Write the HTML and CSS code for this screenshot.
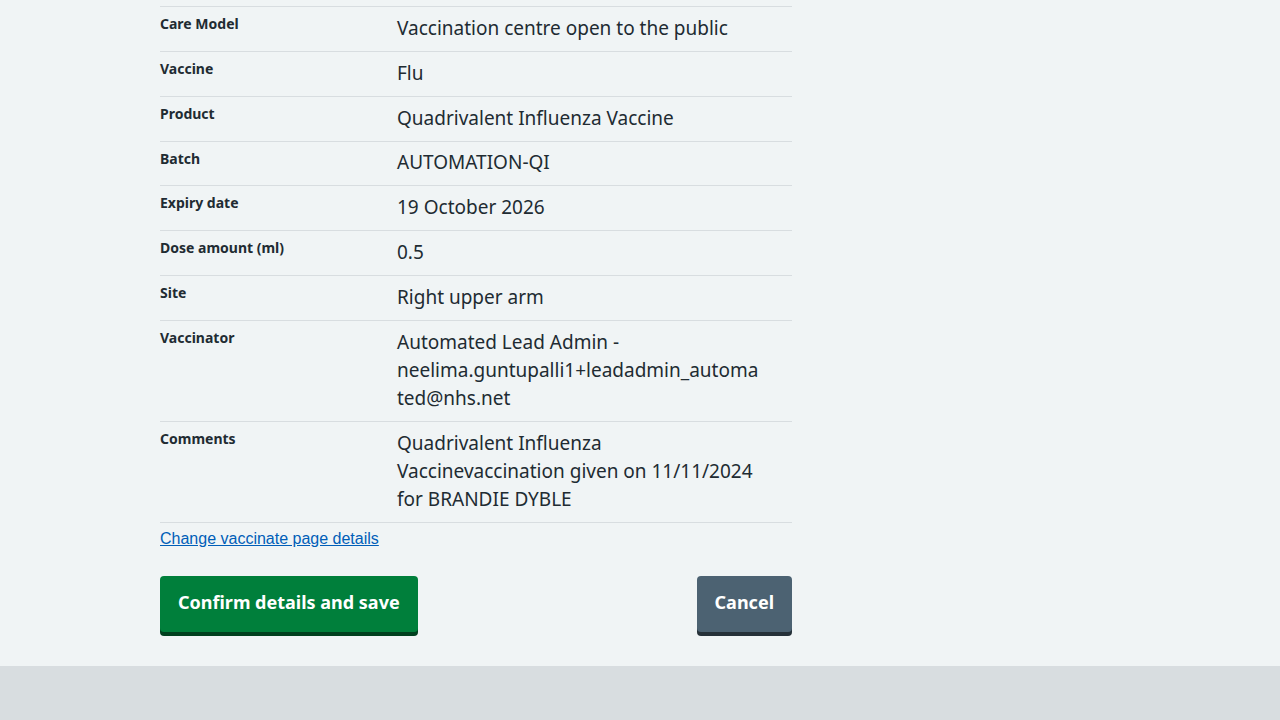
FILE: index.html
```html
<!DOCTYPE html>
<html lang="en">
<head>
<meta charset="utf-8">
<title>Check and confirm</title>
<link rel="stylesheet" href="styles.css">
</head>
<body>
<main class="main">
  <div class="container">
    <dl class="summary">
      <div class="row"><dt class="key">Care Model</dt><dd class="value">Vaccination centre open to the public</dd></div>
      <div class="row"><dt class="key">Vaccine</dt><dd class="value">Flu</dd></div>
      <div class="row"><dt class="key">Product</dt><dd class="value">Quadrivalent Influenza Vaccine</dd></div>
      <div class="row"><dt class="key">Batch</dt><dd class="value">AUTOMATION-QI</dd></div>
      <div class="row"><dt class="key">Expiry date</dt><dd class="value">19 October 2026</dd></div>
      <div class="row"><dt class="key">Dose amount (ml)</dt><dd class="value">0.5</dd></div>
      <div class="row"><dt class="key">Site</dt><dd class="value">Right upper arm</dd></div>
      <div class="row"><dt class="key">Vaccinator</dt><dd class="value">Automated Lead Admin - neelima.guntupalli1+leadadmin_automated@nhs.net</dd></div>
      <div class="row"><dt class="key">Comments</dt><dd class="value">Quadrivalent Influenza Vaccinevaccination given on 11/11/2024 for BRANDIE DYBLE</dd></div>
    </dl>
    <a class="link" href="#">Change vaccinate page details</a>
    <div class="actions">
      <button class="button button-primary" type="button">Confirm details and save</button>
      <button class="button button-secondary" type="button">Cancel</button>
    </div>
  </div>
</main>
<footer class="footer"></footer>
</body>
</html>
```
FILE: styles.css
```css
html, body {
  margin: 0;
  padding: 0;
  height: 100%;
}
body {
  background: #d8dde0;
  color: #212b32;
  font-family: "Noto Sans", "Open Sans", Arial, sans-serif;
}
.main {
  background: #f0f4f5;
  padding: 6px 0 30px;
}
.container {
  width: 632px;
  margin-left: 160px;
}
.summary {
  margin: 0;
  border-top: 1px solid #d8dde0;
}
.row {
  display: grid;
  grid-template-columns: 237px 1fr;
  border-bottom: 1px solid #d8dde0;
}
.key {
  font-size: 14px;
  font-weight: 700;
  line-height: 20px;
  padding: 7px 16px 8px 0;
}
.value {
  margin: 0;
  font-size: 19px;
  line-height: 28px;
  padding: 6.93px 31px 8.93px 0;
  overflow-wrap: anywhere;
}
.link {
  display: inline-block;
  margin-top: 6px;
  font-family: "Liberation Sans", Arial, sans-serif;
  font-size: 16px;
  line-height: 20px;
  color: #005eb8;
  text-decoration: underline;
}
.actions {
  display: flex;
  justify-content: space-between;
  align-items: flex-start;
  margin-top: 27px;
}
.button {
  font-family: inherit;
  font-size: 18px;
  font-weight: 700;
  line-height: 28px;
  color: #ffffff;
  border: 0;
  border-radius: 4px;
  padding: 12px 18px 16px;
  height: 56px;
  margin-bottom: 4px;
  cursor: pointer;
}
.button-primary {
  background: #007f3b;
  box-shadow: 0 4px 0 #00401e;
}
.button-secondary {
  background: #4c6272;
  box-shadow: 0 4px 0 #263139;
}
.footer {
  background: #d8dde0;
}
```
